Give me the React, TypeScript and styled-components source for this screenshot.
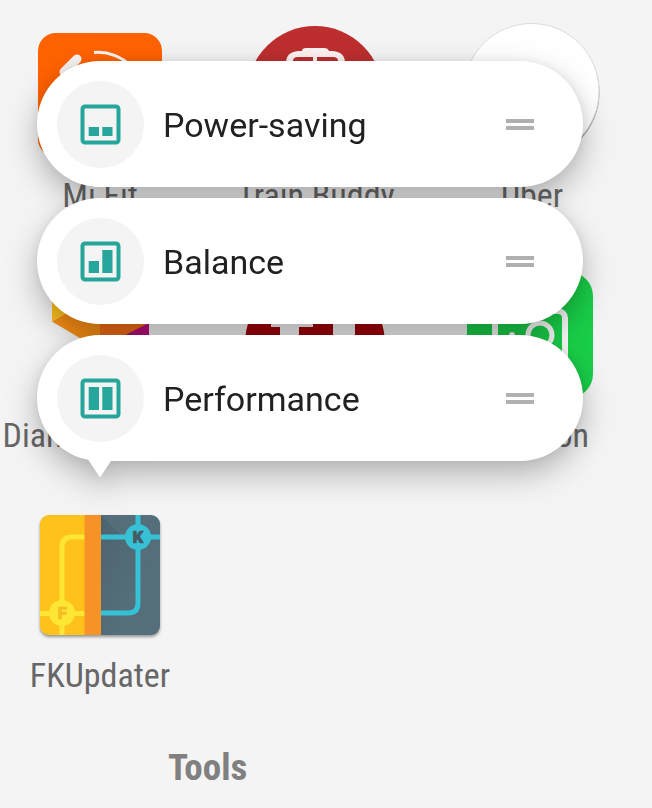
import React from "react";
import styled, { createGlobalStyle } from "styled-components";

const GlobalStyle = createGlobalStyle`
  *, *::before, *::after { box-sizing: border-box; }
  body { margin: 0; background: #f4f4f4; font-family: Roboto, "Liberation Sans", sans-serif; overflow-x: hidden; }
  ul { list-style: none; margin: 0; padding: 0; }
  button { font: inherit; color: inherit; background: none; border: 0; padding: 0; margin: 0; }
`;

const Launcher = styled.main`
  position: relative;
  min-height: 100vh;
  background: #f4f4f4;
`;

const AppGrid = styled.ul`
  display: grid;
  grid-template-columns: repeat(3, 1fr);
  margin: 0 12px 0 -8px;
`;

const AppCell = styled.li`
  display: flex;
  justify-content: center;
  height: 240px;
`;

const AppButton = styled.button`
  display: flex;
  flex-direction: column;
  align-items: center;
  justify-content: flex-start;
  gap: 8px;
  padding-top: 23px;
`;

const AppArt = styled.svg`
  display: block;
  width: 144px;
  height: 144px;
`;

const AppLabel = styled.span`
  color: #676767;
  font-family: "Roboto Condensed", Roboto, "Liberation Sans", sans-serif;
  font-size: 34px;
  line-height: 40px;
  white-space: nowrap;
`;

const SectionTitle = styled.h2`
  margin: 0;
  padding: 27px 0 0 168px;
  color: #808080;
  font-family: "Roboto Condensed", Roboto, "Liberation Sans", sans-serif;
  font-size: 37px;
  font-weight: 700;
  line-height: 42px;
`;

const Popup = styled.div`
  position: absolute;
  top: 61px;
  left: 37px;
  right: 69px;
  filter: drop-shadow(0 13px 16px rgba(0, 0, 0, 0.26)) drop-shadow(0 0 5px rgba(0, 0, 0, 0.07));
`;

const ShortcutList = styled.ul`
  display: flex;
  flex-direction: column;
  gap: 11px;
`;

const Shortcut = styled.button`
  display: flex;
  align-items: center;
  gap: 19px;
  width: 100%;
  height: 126px;
  padding: 0 49px 0 20px;
  border-radius: 63px;
  background: #fff;
  text-align: left;
`;

const IconDisc = styled.span`
  display: flex;
  align-items: center;
  justify-content: center;
  width: 87px;
  height: 87px;
  border-radius: 50%;
  background: #f4f4f4;
`;

const ShortcutLabel = styled.span`
  flex: 1;
  padding-top: 2px;
  color: #212121;
  font-size: 34px;
  line-height: 40px;
`;

const Handle = styled.span`
  width: 28px;
  height: 11px;
  border: solid #b0b0b0;
  border-width: 4px 0;
`;

const Pointer = styled.svg`
  display: block;
  width: 26px;
  height: 20px;
  margin: -3px 0 0 50px;
`;

function LevelIcon({ left, right }: { left: number; right: number }) {
  return (
    <svg width="41" height="41" viewBox="0 0 41 41" aria-hidden="true">
      <rect x="2.5" y="2.5" width="36" height="36" rx="2.5" fill="none" stroke="#26a69a" strokeWidth="4" />
      <path d={`M8.700 ${32 - left}h10.300V32H8.700zM22.300 ${32 - right}h10.200V32H22.300z`} fill="#26a69a" />
    </svg>
  );
}

const MiFitArt = () => (
  <AppArt viewBox="28 23 144 144" aria-hidden="true">
    <rect x="38" y="33" width="124" height="124" rx="18" fill="#ff6200" />
    <path d="M64 72L77 59" stroke="#f7f3f1" strokeWidth="9" strokeLinecap="round" />
    <path d="M94 52.500C108 51 122 57 131 66" stroke="#f7f3f1" strokeWidth="3" fill="none" />
  </AppArt>
);

const TrainArt = () => (
  <AppArt viewBox="244 23 144 144" aria-hidden="true">
    <circle cx="315" cy="94" r="68" fill="#bd2e2e" />
    <path d="M286 110V63Q286 52 298 51L302 51Q302 48 306 48H324Q328 48 329 51L333 51Q345 52 345 63V110Z" fill="#fbf2f1" />
    <path d="M293 82V61Q293 57 298 57H313V82ZM317 82V57H333Q338 57 338 61V82Z" fill="#bd2e2e" />
  </AppArt>
);

const UberArt = () => (
  <AppArt viewBox="460 23 144 144" aria-hidden="true">
    <circle cx="532" cy="92.500" r="67.500" fill="#808080" opacity="0.8" />
    <circle cx="531.500" cy="91" r="67.500" fill="#fff" stroke="#dcdcdc" strokeWidth="1" />
  </AppArt>
);

const GemArt = () => (
  <AppArt viewBox="28 263 144 144" aria-hidden="true">
    <path d="M52 298L100 276V294L52 321.500Z" fill="#ffc21c" />
    <path d="M52 321.500L100 294V350Z" fill="#f88e14" />
    <path d="M100 294L149 323L100 350Z" fill="#f06c18" />
    <path d="M149 323L100 348V376L149 350Z" fill="#8f1875" />
    <path d="M149 323V350L130 333Z" fill="#bd0d7c" />
  </AppArt>
);

const MovieArt = () => (
  <AppArt viewBox="244 263 144 144" aria-hidden="true">
    <circle cx="315" cy="344" r="70" fill="#a00008" />
    <path d="M271 318H313V327H299V390H280V327H271ZM333 300H355V390H333Z" fill="#f4f4f4" />
  </AppArt>
);

const TicketArt = () => (
  <AppArt viewBox="460 263 144 144" aria-hidden="true">
    <rect x="467" y="272" width="126" height="126" rx="24" fill="#19ce48" />
    <rect x="495" y="311" width="70" height="60" rx="7" fill="none" stroke="#f8f8f8" strokeWidth="6" />
    <circle cx="540" cy="335" r="12" fill="none" stroke="#f8f8f8" strokeWidth="5" />
    <circle cx="512" cy="335" r="3" fill="#f8f8f8" />
  </AppArt>
);

const UpdaterArt = () => (
  <AppArt viewBox="28 503 144 144" aria-hidden="true">
    <defs>
      <clipPath id="updater-tile"><rect x="40" y="515" width="120" height="120" rx="9" /></clipPath>
      <filter id="updater-shadow" x="-10%" y="-10%" width="120%" height="120%"><feGaussianBlur stdDeviation="1.500" /></filter>
      <linearGradient id="updater-shade" x1="0" y1="0" x2="1" y2="1">
        <stop offset="0" stopColor="#455a64" stopOpacity="0.5" />
        <stop offset="0.6" stopColor="#455a64" stopOpacity="0" />
      </linearGradient>
    </defs>
    <rect x="40" y="517" width="120" height="120" rx="9" fill="#555" opacity="0.6" filter="url(#updater-shadow)" />
    <g clipPath="url(#updater-tile)">
      <path d="M40 515H85V636H40Z" fill="#fec21a" />
      <path d="M101 515H161V636H101Z" fill="#546e7a" />
      <path d="M101 515L161 575V636H101Z" fill="url(#updater-shade)" />
      <path d="M40 613.500H85M62 636V547Q62 537 72 537H85" fill="none" stroke="#ffe634" strokeWidth="5" />
      <path d="M101 537H161M138 515V603Q138 613 128 613H101" fill="none" stroke="#36c1d6" strokeWidth="5" />
      <path d="M84.500 515H101V636H84.500Z" fill="#f79226" />
    </g>
    <circle cx="62" cy="613" r="13" fill="#ffe634" />
    <circle cx="138" cy="537" r="13" fill="#36c1d6" />
    <text x="62.500" y="619" textAnchor="middle" fontFamily="Roboto, sans-serif" fontSize="17" fontWeight="900" fill="#f5bd20" stroke="#f5bd20" strokeWidth="0.6">F</text>
    <text x="138" y="543" textAnchor="middle" fontFamily="Roboto, sans-serif" fontSize="17" fontWeight="900" fill="#455a64" stroke="#455a64" strokeWidth="0.6">K</text>
  </AppArt>
);

const apps = [
  { label: "Mi Fit", Art: MiFitArt },
  { label: "Train Buddy", Art: TrainArt },
  { label: "Uber", Art: UberArt },
  { label: "Diamond Dash", Art: GemArt },
  { label: "", Art: MovieArt },
  { label: "Groupon", Art: TicketArt },
  { label: "FKUpdater", Art: UpdaterArt },
];

const shortcuts = [
  { label: "Power-saving", left: 9, right: 9 },
  { label: "Balance", left: 12, right: 23 },
  { label: "Performance", left: 23, right: 23 },
];

export default function App() {
  return (
    <Launcher>
      <GlobalStyle />
      <AppGrid>
        {apps.map(({ label, Art }, index) => (
          <AppCell key={index}>
            <AppButton type="button" aria-label={label || "App"}>
              <Art />
              {label && <AppLabel>{label}</AppLabel>}
            </AppButton>
          </AppCell>
        ))}
      </AppGrid>
      <SectionTitle>Tools</SectionTitle>
      <Popup>
        <ShortcutList>
          {shortcuts.map(({ label, left, right }) => (
            <li key={label}>
              <Shortcut type="button">
                <IconDisc><LevelIcon left={left} right={right} /></IconDisc>
                <ShortcutLabel>{label}</ShortcutLabel>
                <Handle />
              </Shortcut>
            </li>
          ))}
        </ShortcutList>
        <Pointer viewBox="0 0 26 20" aria-hidden="true"><path d="M0 0H26L13 19.500Z" fill="#fff" /></Pointer>
      </Popup>
    </Launcher>
  );
}
